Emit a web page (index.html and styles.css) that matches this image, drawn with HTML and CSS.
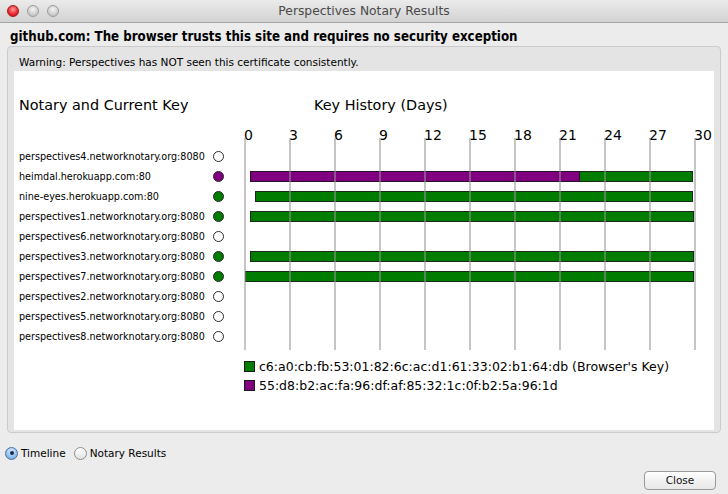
FILE: index.html
```html
<!DOCTYPE html>
<html>
<head>
<meta charset="utf-8">
<link rel="stylesheet" href="styles.css">
</head>
<body>
<div class="window">
  <div class="titlebar">
    <div class="lights"><span class="light red"></span><span class="light"></span><span class="light"></span></div>
    <div class="title">Perspectives Notary Results</div>
  </div>
  <h1 class="summary">github.com: The browser trusts this site and requires no security exception</h1>
  <div class="group">
    <div class="warning">Warning: Perspectives has NOT seen this certificate consistently.</div>
    <div class="pane">
      <div class="heads">
        <h2 class="h-notary">Notary and Current Key</h2>
        <h2 class="h-history">Key History (Days)</h2>
      </div>
      <div class="axis">
        <span>0</span><span>3</span><span>6</span><span>9</span><span>12</span><span>15</span><span>18</span><span>21</span><span>24</span><span>27</span><span>30</span>
      </div>
      <div class="plot">
        <div class="gridlines"></div>
        <div class="row"><span class="name">perspectives4.networknotary.org:8080</span><span class="dot"></span><div class="track"></div></div>
        <div class="row"><span class="name">heimdal.herokuapp.com:80</span><span class="dot purple"></span><div class="track"><div class="bar" style="margin-left:6px;width:443px"><span class="seg purple" style="flex:330"></span><span class="seg green" style="flex:113"></span></div></div></div>
        <div class="row"><span class="name">nine-eyes.herokuapp.com:80</span><span class="dot green"></span><div class="track"><div class="bar" style="margin-left:11px;width:438px"><span class="seg green" style="flex:1"></span></div></div></div>
        <div class="row"><span class="name">perspectives1.networknotary.org:8080</span><span class="dot green"></span><div class="track"><div class="bar" style="margin-left:6px;width:444px"><span class="seg green" style="flex:1"></span></div></div></div>
        <div class="row"><span class="name">perspectives6.networknotary.org:8080</span><span class="dot"></span><div class="track"></div></div>
        <div class="row"><span class="name">perspectives3.networknotary.org:8080</span><span class="dot green"></span><div class="track"><div class="bar" style="margin-left:6px;width:444px"><span class="seg green" style="flex:1"></span></div></div></div>
        <div class="row"><span class="name">perspectives7.networknotary.org:8080</span><span class="dot green"></span><div class="track"><div class="bar" style="margin-left:1px;width:449px"><span class="seg green" style="flex:1"></span></div></div></div>
        <div class="row"><span class="name">perspectives2.networknotary.org:8080</span><span class="dot"></span><div class="track"></div></div>
        <div class="row"><span class="name">perspectives5.networknotary.org:8080</span><span class="dot"></span><div class="track"></div></div>
        <div class="row"><span class="name">perspectives8.networknotary.org:8080</span><span class="dot"></span><div class="track"></div></div>
      </div>
      <div class="legend">
        <div class="key"><span class="swatch green"></span>c6:a0:cb:fb:53:01:82:6c:ac:d1:61:33:02:b1:64:db (Browser's Key)</div>
        <div class="key"><span class="swatch purple"></span>55:d8:b2:ac:fa:96:df:af:85:32:1c:0f:b2:5a:96:1d</div>
      </div>
    </div>
  </div>
  <div class="footer">
    <div class="radios">
      <label class="radio"><span class="radio-btn on"></span>Timeline</label>
      <label class="radio"><span class="radio-btn"></span>Notary Results</label>
    </div>
    <div class="actions"><button class="btn">Close</button></div>
  </div>
</div>
</body>
</html>
```
FILE: styles.css
```css
* { box-sizing: border-box; }
html, body { margin: 0; padding: 0; }
body {
  width: 728px;
  height: 494px;
  overflow: hidden;
  background: #ececec;
  font-family: "DejaVu Sans", sans-serif;
  color: #000;
}
.window {
  width: 728px;
  height: 494px;
  background: #ececec;
  display: flex;
  flex-direction: column;
}
.titlebar {
  height: 23px;
  flex: none;
  display: flex;
  align-items: center;
  position: relative;
  background: linear-gradient(#ebebeb, #d2d2d2);
  border-bottom: 1px solid #a3a3a3;
}
.lights {
  display: flex;
  gap: 8px;
  padding-left: 7px;
}
.light {
  width: 12px;
  height: 12px;
  border-radius: 50%;
  background: radial-gradient(circle at 50% 35%, #f4f4f4, #c8c8c8 70%, #b0b0b0);
  border: 1px solid #9c9c9c;
}
.light.red {
  background: radial-gradient(circle at 50% 35%, #ff9a9a, #e8252a 60%, #b8161a);
  border-color: #a11a1a;
}
.title {
  position: absolute;
  left: 0;
  right: 0;
  top: 0;
  bottom: 0;
  display: flex;
  align-items: center;
  justify-content: center;
  font-size: 12.3px;
  color: #4a4a4a;
  pointer-events: none;
}
.summary {
  margin: 6px 0 1px 10px;
  font-family: "DejaVu Sans Condensed", "DejaVu Sans", sans-serif;
  font-weight: bold;
  font-size: 13.2px;
  line-height: 16px;
}
.group {
  margin: 0 7px;
  height: 387px;
  border: 1px solid #cbcbcb;
  border-radius: 4px;
  background: #e4e4e4;
  padding: 8px 6px 2px;
  display: flex;
  flex-direction: column;
}
.warning {
  font-size: 10.5px;
  line-height: 14px;
  padding-left: 5px;
  margin-bottom: 2px;
}
.pane {
  flex: 1;
  background: #fff;
  padding-top: 24px;
}
.heads {
  display: flex;
  height: 20px;
  align-items: center;
}
.heads h2 {
  margin: 0;
  font-weight: normal;
  font-size: 14.4px;
  line-height: 20px;
}
.h-notary { padding-left: 5px; width: 300px; }
.axis {
  display: flex;
  padding-left: 230px;
  margin-top: 12px;
  height: 16px;
  line-height: 16px;
  font-size: 14px;
}
.axis span { width: 45px; flex: none; }
.plot {
  position: relative;
  padding: 3px 0 4px;
}
.gridlines {
  position: absolute;
  left: 230px;
  width: 452px;
  top: -5px;
  bottom: 0;
  background: repeating-linear-gradient(to right, rgba(150,150,150,0.55) 0 2px, transparent 2px 45px);
  z-index: 1;
  pointer-events: none;
}
.row {
  display: flex;
  align-items: center;
  height: 20px;
  padding-left: 5px;
}
.name {
  width: 194px;
  flex: none;
  font-family: "DejaVu Sans Condensed", "DejaVu Sans", sans-serif;
  font-size: 10.7px;
  white-space: nowrap;
}
.dot {
  width: 11px;
  height: 11px;
  flex: none;
  border-radius: 50%;
  border: 1px solid #2a2a2a;
  background: #fff;
}
.dot.green { background: #007c00; }
.dot.purple { background: #800080; }
.track {
  margin-left: 20px;
  width: 450px;
  height: 11px;
  display: flex;
}
.bar {
  display: flex;
  height: 11px;
}
.seg {
  height: 11px;
  border: 1px solid #1a2a1a;
}
.seg + .seg { border-left: 0; }
.seg.green { background: #007c00; }
.seg.purple { background: #800080; border-color: #2a102a; }
.legend {
  margin-top: 7px;
  padding-left: 230px;
  font-size: 12.5px;
}
.key {
  display: flex;
  align-items: center;
  height: 19px;
  white-space: nowrap;
}
.swatch {
  width: 11px;
  height: 11px;
  border: 1px solid #1a1a1a;
  margin-right: 4px;
  flex: none;
}
.swatch.green { background: #007c00; }
.swatch.purple { background: #800080; }
.footer {
  flex: 1;
  display: flex;
  flex-direction: column;
  font-size: 10.5px;
}
.radios {
  display: flex;
  gap: 8px;
  padding-left: 5px;
  margin-top: 13px;
  height: 14px;
  align-items: center;
}
.radio {
  display: flex;
  align-items: center;
  gap: 3px;
}
.radio-btn {
  width: 13px;
  height: 13px;
  border-radius: 50%;
  border: 1px solid #8e8e8e;
  background: linear-gradient(#ffffff, #e2e2e2);
  display: flex;
  align-items: center;
  justify-content: center;
}
.radio-btn.on {
  border-color: #4f6f9a;
  background: radial-gradient(circle at 50% 30%, #d6ebff, #8fbef0 60%, #5f9ae0);
}
.radio-btn.on::after {
  content: "";
  width: 4px;
  height: 4px;
  border-radius: 50%;
  background: #1c2a44;
}
.actions {
  display: flex;
  justify-content: flex-end;
  padding-right: 12px;
  margin-top: 11px;
}
.btn {
  width: 72px;
  height: 19px;
  font-family: "DejaVu Sans", sans-serif;
  font-size: 10.5px;
  color: #111;
  border: 1px solid #9a9a9a;
  border-radius: 4px;
  background: linear-gradient(#ffffff, #f1f1f1 50%, #e9e9e9);
  padding: 0;
  line-height: 17px;
}
```
